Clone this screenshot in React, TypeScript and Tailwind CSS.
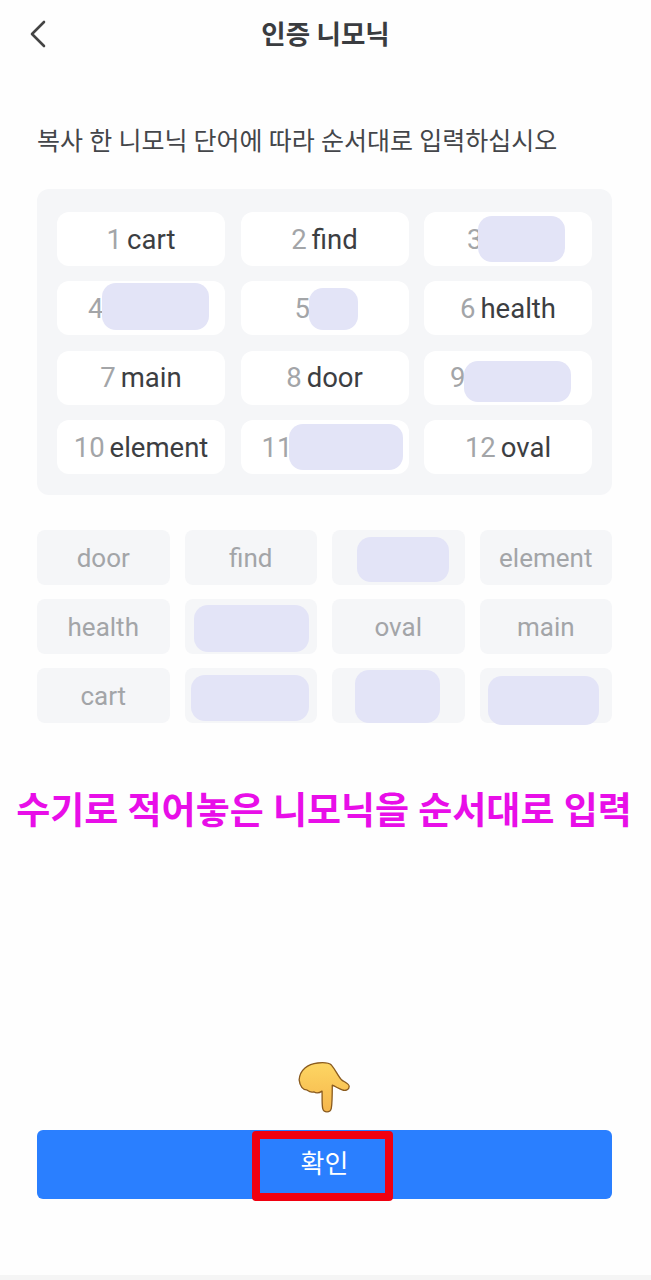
const words = [
  { num: '1', word: 'cart' },
  { num: '2', word: 'find' },
  { num: '3', blob: 'left-[54px] top-[4px] w-[87px] h-[46px]', pad: 'pl-[43px] justify-start' },
  { num: '4', blob: 'left-[45px] top-[2px] w-[107px] h-[47px]', pad: 'pl-[31px] justify-start' },
  { num: '5', blob: 'left-[68px] top-[7px] w-[49px] h-[42px]', pad: 'pl-[54px] justify-start' },
  { num: '6', word: 'health' },
  { num: '7', word: 'main' },
  { num: '8', word: 'door' },
  { num: '9', blob: 'left-[40px] top-[10px] w-[107px] h-[41px]', pad: 'pl-[26px] justify-start' },
  { num: '10', word: 'element' },
  { num: '11', blob: 'left-[48px] top-[4px] w-[114px] h-[46px]', pad: 'pl-[21px] justify-start' },
  { num: '12', word: 'oval' },
];

const chips = [
  { word: 'door' },
  { word: 'find' },
  { blob: 'left-[25px] top-[7px] w-[92px] h-[45px]' },
  { word: 'element' },
  { word: 'health' },
  { blob: 'left-[9px] top-[6px] w-[115px] h-[47px]' },
  { word: 'oval' },
  { word: 'main' },
  { word: 'cart' },
  { blob: 'left-[6px] top-[7px] w-[118px] h-[46px]' },
  { blob: 'left-[23px] top-[2px] w-[85px] h-[53px]' },
  { blob: 'left-[8px] top-[8px] w-[111px] h-[49px]' },
];

function PointingHand() {
  return (
    <svg width="55" height="53" viewBox="200 35 165 160">
      <defs>
        <linearGradient id="hand" x1="0" y1="0" x2="0" y2="1">
          <stop offset="0" stopColor="#fdd663" />
          <stop offset="1" stopColor="#f6b64c" />
        </linearGradient>
      </defs>
      <path
        d="M206 92 C208 62 232 44 262 41 C280 39 296 40 304 48 C316 62 324 82 334 92 C344 100 356 102 357 112 C357 122 346 126 336 122 C326 119 316 112 306 108 C306 130 306 160 303 178 C300 192 280 192 277 178 C274 162 276 140 275 126 C266 132 256 132 250 128 C242 132 234 126 228 122 C218 122 208 112 206 92 Z"
        fill="url(#hand)"
        stroke="#8a5b1e"
        strokeWidth="4"
        strokeLinejoin="round"
      />
    </svg>
  );
}

export default function App() {
  return (
    <div className="flex flex-col h-[1280px] bg-[#fefefe] font-['Roboto','Noto_Sans_CJK_KR',sans-serif]">
      <div className="relative flex items-center justify-center h-[70px] shrink-0">
        <button className="absolute left-[28px] top-[19px]">
          <svg width="20" height="30" viewBox="0 0 20 30" fill="none" stroke="#444444" strokeWidth="2.6" strokeLinecap="round" strokeLinejoin="round">
            <path d="M16 3 L4 15 L16 27" />
          </svg>
        </button>
        <h1 className="text-[26.5px] font-bold text-[#3a3c40]">인증 니모닉</h1>
      </div>

      <div className="px-[37px] mt-[52px]">
        <p className="text-[25px] leading-[40px] text-[#44464a] whitespace-nowrap">복사 한 니모닉 단어에 따라 순서대로 입력하십시오</p>
      </div>

      <div className="ml-[37px] mr-[39px] mt-[27px] bg-[#f5f6f8] rounded-[12px] px-[20px] pt-[23px] pb-[21px] grid grid-cols-3 gap-x-[15.5px] gap-y-[15.3px]">
        {words.map((w) => (
          <div
            key={w.num}
            className={`relative flex items-center h-[54px] bg-white rounded-[12px] text-[27.5px] ${w.pad ?? 'justify-center'}`}
          >
            <span className="text-[#a3a5a8] pt-[1px]">{w.num}</span>
            {w.word && <span className="ml-[5px] pt-[1px] text-[#3c3e42]">{w.word}</span>}
            {w.blob && <div className={`absolute bg-[#e3e4f7] rounded-[14px] ${w.blob}`} />}
          </div>
        ))}
      </div>

      <div className="ml-[37px] mr-[39px] mt-[35px] grid grid-cols-4 gap-x-[15px] gap-y-[14px]">
        {chips.map((c, i) => (
          <div
            key={i}
            className="relative flex items-center justify-center h-[55px] pt-[2px] bg-[#f5f6f8] rounded-[8px] text-[26px] text-[#a3a5a8]"
          >
            {c.word}
            {c.blob && <div className={`absolute bg-[#e3e4f7] rounded-[14px] ${c.blob}`} />}
          </div>
        ))}
      </div>

      <p className="mt-[61px] pr-[3px] text-center text-[37px] leading-[56px] font-bold text-[#e80ee8] whitespace-nowrap">
        수기로 적어놓은 니모닉을 순서대로 입력
      </p>

      <div className="flex-1" />

      <div className="flex justify-center pr-[2px] mb-[16px]">
        <PointingHand />
      </div>

      <div className="relative ml-[37px] mr-[39px] h-[69px] bg-[#2a7fff] rounded-[6px] flex items-center justify-center">
        <span className="text-[26px] text-white">확인</span>
        <div className="absolute left-[215px] top-[1px] w-[141px] h-[70px] border-[8px] border-[#f00010] rounded-[4px]" />
      </div>

      <div className="h-[81px] shrink-0 flex flex-col justify-end">
        <div className="h-[5px] bg-[#f5f5f5]" />
      </div>
    </div>
  );
}
